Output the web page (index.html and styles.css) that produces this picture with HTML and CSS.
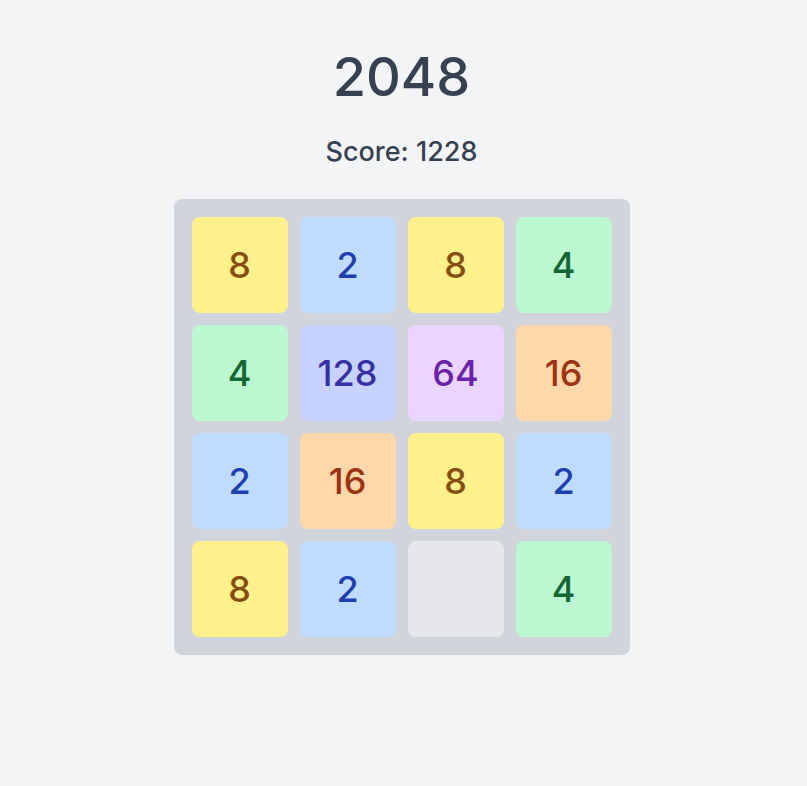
FILE: index.html
```html
<!DOCTYPE html>
<html>
<head>
<meta charset="utf-8">
<link rel="stylesheet" href="styles.css">
</head>
<body>
<main class="app">
  <h1 class="title">2048</h1>
  <div class="score">Score: 1228</div>
  <div class="board">
    <div class="tile t8">8</div>
    <div class="tile t2">2</div>
    <div class="tile t8">8</div>
    <div class="tile t4">4</div>
    <div class="tile t4">4</div>
    <div class="tile t128">128</div>
    <div class="tile t64">64</div>
    <div class="tile t16">16</div>
    <div class="tile t2">2</div>
    <div class="tile t16">16</div>
    <div class="tile t8">8</div>
    <div class="tile t2">2</div>
    <div class="tile t8">8</div>
    <div class="tile t2">2</div>
    <div class="tile empty"></div>
    <div class="tile t4">4</div>
  </div>
</main>
</body>
</html>
```
FILE: styles.css
```css
html, body {
  margin: 0;
  padding: 0;
  background: #f3f4f6;
  font-family: Inter, "Noto Sans", sans-serif;
  color: #374151;
}
.app {
  display: flex;
  flex-direction: column;
  align-items: center;
  padding-top: 45px;
  padding-right: 4px;
}
.title {
  margin: 0;
  font-size: 54px;
  line-height: 64px;
  font-weight: 500;
}
.score {
  margin-top: 26px;
  font-size: 27px;
  line-height: 34px;
  font-weight: 500;
}
.board {
  margin-top: 30px;
  display: grid;
  grid-template-columns: repeat(4, 96px);
  grid-auto-rows: 96px;
  gap: 12px;
  padding: 18px;
  background: #d1d5db;
  border-radius: 8px;
}
.tile {
  display: flex;
  align-items: center;
  justify-content: center;
  border-radius: 8px;
  font-size: 36px;
  font-weight: 500;
}
.empty { background: #e5e7eb; }
.t2 { background: #bfdbfe; color: #1e40af; }
.t4 { background: #bbf7d0; color: #166534; }
.t8 { background: #fef08a; color: #854d0e; }
.t16 { background: #fed7aa; color: #9a3412; }
.t64 { background: #e9d5ff; color: #6b21a8; }
.t128 { background: #c7d2fe; color: #3730a3; }
```
